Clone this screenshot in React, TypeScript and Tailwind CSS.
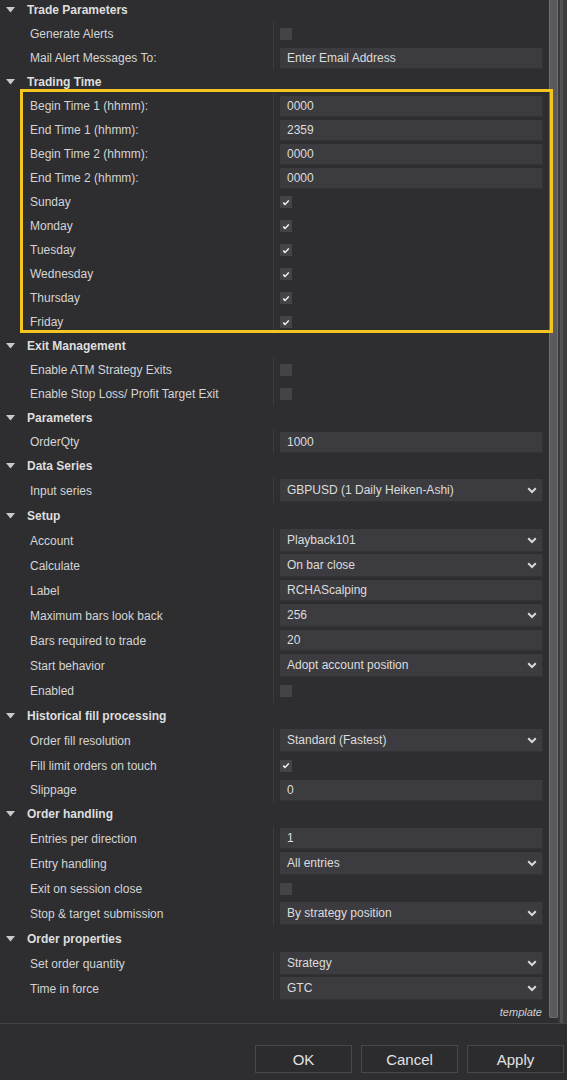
import React from 'react';

type Row =
  | { kind: 'header'; label: string }
  | { kind: 'text'; label: string; value: string }
  | { kind: 'select'; label: string; value: string }
  | { kind: 'check'; label: string; checked: boolean };

const rows: Row[] = [
  { kind: 'header', label: 'Trade Parameters' },
  { kind: 'check', label: 'Generate Alerts', checked: false },
  { kind: 'text', label: 'Mail Alert Messages To:', value: 'Enter Email Address' },
  { kind: 'header', label: 'Trading Time' },
  { kind: 'text', label: 'Begin Time 1 (hhmm):', value: '0000' },
  { kind: 'text', label: 'End Time 1 (hhmm):', value: '2359' },
  { kind: 'text', label: 'Begin Time 2 (hhmm):', value: '0000' },
  { kind: 'text', label: 'End Time 2 (hhmm):', value: '0000' },
  { kind: 'check', label: 'Sunday', checked: true },
  { kind: 'check', label: 'Monday', checked: true },
  { kind: 'check', label: 'Tuesday', checked: true },
  { kind: 'check', label: 'Wednesday', checked: true },
  { kind: 'check', label: 'Thursday', checked: true },
  { kind: 'check', label: 'Friday', checked: true },
  { kind: 'header', label: 'Exit Management' },
  { kind: 'check', label: 'Enable ATM Strategy Exits', checked: false },
  { kind: 'check', label: 'Enable Stop Loss/ Profit Target Exit', checked: false },
  { kind: 'header', label: 'Parameters' },
  { kind: 'text', label: 'OrderQty', value: '1000' },
  { kind: 'header', label: 'Data Series' },
  { kind: 'select', label: 'Input series', value: 'GBPUSD (1 Daily Heiken-Ashi)' },
  { kind: 'header', label: 'Setup' },
  { kind: 'select', label: 'Account', value: 'Playback101' },
  { kind: 'select', label: 'Calculate', value: 'On bar close' },
  { kind: 'text', label: 'Label', value: 'RCHAScalping' },
  { kind: 'select', label: 'Maximum bars look back', value: '256' },
  { kind: 'text', label: 'Bars required to trade', value: '20' },
  { kind: 'select', label: 'Start behavior', value: 'Adopt account position' },
  { kind: 'check', label: 'Enabled', checked: false },
  { kind: 'header', label: 'Historical fill processing' },
  { kind: 'select', label: 'Order fill resolution', value: 'Standard (Fastest)' },
  { kind: 'check', label: 'Fill limit orders on touch', checked: true },
  { kind: 'text', label: 'Slippage', value: '0' },
  { kind: 'header', label: 'Order handling' },
  { kind: 'text', label: 'Entries per direction', value: '1' },
  { kind: 'select', label: 'Entry handling', value: 'All entries' },
  { kind: 'check', label: 'Exit on session close', checked: false },
  { kind: 'select', label: 'Stop & target submission', value: 'By strategy position' },
  { kind: 'header', label: 'Order properties' },
  { kind: 'select', label: 'Set order quantity', value: 'Strategy' },
  { kind: 'select', label: 'Time in force', value: 'GTC' },
];

function Chevron() {
  return (
    <svg width="10" height="7" viewBox="0 0 10 7" className="shrink-0">
      <polyline points="1.2,1.2 5,5 8.8,1.2" fill="none" stroke="#d8d8d8" strokeWidth="2" />
    </svg>
  );
}

function Checkbox({ checked }: { checked: boolean }) {
  return (
    <div className="w-[12px] h-[12px] bg-[#444447] flex items-center justify-center">
      {checked && (
        <svg width="8" height="7" viewBox="0 0 8 7">
          <polyline points="1.2,3.6 3,5.4 6.8,1.4" fill="none" stroke="#f0f0f0" strokeWidth="1.5" />
        </svg>
      )}
    </div>
  );
}

function PropertyRow({ row, index }: { row: Row; index: number }) {
  // upper part of the grid uses 24px rows, the lower part mostly 25px
  const height = index < 20 || index === 32 || index === 33 ? 'h-[24px]' : 'h-[25px]';

  if (row.kind === 'header') {
    return (
      <div className={`${height} flex items-center`}>
        <svg width="9" height="6" viewBox="0 0 9 6" className="ml-[6px] mr-[12px]">
          <polygon points="0,0 9,0 4.5,5.5" fill="#c9c9c9" />
        </svg>
        <span className="text-[12px] font-bold text-[#dedede]">{row.label}</span>
      </div>
    );
  }

  return (
    <div className={`${height} flex items-center`}>
      <div className="w-[274px] h-full flex items-center pl-[30px] border-r border-[#3b3b3e] text-[12px] text-[#d4d4d4] whitespace-nowrap">
        {row.label}
      </div>
      <div className="flex-1 pl-[6px] pr-[4px] flex items-center">
        {row.kind === 'check' && <Checkbox checked={row.checked} />}
        {row.kind === 'text' && (
          <div className="w-full h-[21px] bg-[#3c3c40] border-b border-r border-[#333336] flex items-center pl-[7px] text-[12px] text-[#dcdcdc]">
            {row.value}
          </div>
        )}
        {row.kind === 'select' && (
          <div className="w-full h-[23px] bg-[#3c3c40] border-b border-r border-[#333336] flex items-center justify-between pl-[7px] pr-[5px] text-[12px] text-[#dcdcdc]">
            <span>{row.value}</span>
            <Chevron />
          </div>
        )}
      </div>
    </div>
  );
}

export default function App() {
  return (
    <div className="w-[567px] h-[1080px] bg-[#2e2e31] font-['Liberation_Sans',Arial,sans-serif] flex flex-col overflow-hidden">
      <div className="relative h-[1024px] flex border-b border-[#434346]">
        <div className="flex-1 flex flex-col">
          <div className="-mt-[2px]">
            {rows.map((row, i) => (
              <PropertyRow key={i} row={row} index={i} />
            ))}
          </div>
          <div className="h-[22px] flex items-center justify-end pr-[5px] text-[11px] italic text-[#cfcfcf]">
            template
          </div>
        </div>

        {/* scrollbar */}
        <div className="w-[20px] h-full flex bg-[#2e2e31]">
          <div className="w-[2px]" />
          <div className="w-[9px] h-[1018px] bg-[#5a5a5d] border-x border-b border-[#707072] rounded-b-[2px]" />
          <div className="w-[2px] bg-[#3a3a3d]" />
          <div className="w-[3px] bg-[#525255]" />
          <div className="flex-1 bg-[#3d3d40]" />
        </div>

        {/* highlight */}
        <div className="absolute left-[20px] top-[89px] w-[533px] h-[244px] border-[3px] border-[#f5c51f] pointer-events-none" />
      </div>

      <div className="flex-1 flex items-start justify-end gap-[9px] pt-[21px] pr-[3px]">
        {['OK', 'Cancel', 'Apply'].map((label) => (
          <button
            key={label}
            className="w-[97px] h-[28px] pt-[2px] border border-[#48484b] bg-[#2c2c2f] text-[15px] text-[#e2e2e2] flex items-center justify-center"
          >
            {label}
          </button>
        ))}
      </div>
    </div>
  );
}
